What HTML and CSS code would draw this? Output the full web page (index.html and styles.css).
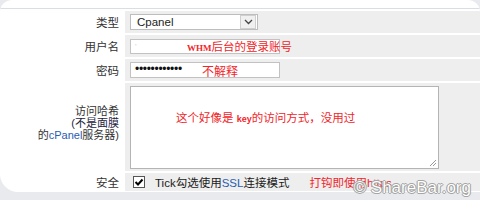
FILE: index.html
```html
<!DOCTYPE html>
<html>
<head>
	<meta charset="utf-8">
	<title>cPanel 设置</title>
	<link rel="stylesheet" href="styles.css">
</head>
<body>
<div class="page">
	<div class="panel">
		<div class="topbar"></div>
		<div class="form">
			<div class="lbl">类型</div>
			<div class="cell">
				<div class="select"><span>Cpanel</span><i class="arrow"><svg width="9" height="6" viewBox="0 0 9 6"><path d="M1 1 L4.5 4.5 L8 1" fill="none" stroke="#444" stroke-width="1.3"/></svg></i></div>
			</div>

			<div class="lbl">用户名</div>
			<div class="cell">
				<div class="field"><span class="speck">'</span></div>
				<span class="note note-user"><b>WHM</b>后台的登录账号</span>
			</div>

			<div class="lbl">密码</div>
			<div class="cell">
				<div class="field pwd">••••••••••••</div>
				<span class="note note-pwd">不解释</span>
			</div>

			<div class="lbl-multi">访问哈希<br><span class="dark">(不是面膜</span><br>的<span class="blue">cPanel</span>服务器)</div>
			<div class="cell cell-top">
				<div class="area">
					<span class="note">这个好像是 <b>key</b>的访问方式，没用过</span>
					<svg class="grip" width="9" height="9" viewBox="0 0 9 9"><path d="M8 2 L2 8 M8 5 L5 8" stroke="#999" stroke-width="1"/></svg>
				</div>
			</div>

			<div class="lbl">安全</div>
			<div class="cell">
				<span class="check"><svg width="10" height="10" viewBox="0 0 10 10"><path d="M1.5 5 L4 7.5 L8.5 2.5" fill="none" stroke="#000" stroke-width="2"/></svg></span>
				<span class="tick">Tick勾选使用<span class="blue">SSL</span>连接模式</span>
				<span class="note note-ssl">打钩即使用https</span>
			</div>
		</div>
	</div>
	<div class="mark">© ShareBar.org</div>
</div>
</body>
</html>
```

FILE: styles.css
```css
body{margin:0;background:#e8eaed;color:#222;font:11.5px "Liberation Sans","Noto Sans CJK SC",sans-serif;}
.page{position:relative;width:480px;height:200px;overflow:hidden;}
.panel{background:#fff;border-radius:12px 12px 0 18px;height:192px;overflow:hidden;}
.topbar{height:8px;border-bottom:1px solid #d9dee4;margin-bottom:2px;}
.form{display:grid;grid-template-columns:125px 1fr;grid-template-rows:22px 22px 22px 88px 18px;row-gap:2px;}
.lbl{display:flex;align-items:center;justify-content:flex-end;padding-right:6px;color:#333;}
.lbl-multi{padding:22px 6px 0 0;text-align:right;font-size:11px;line-height:12px;color:#333;}
.lbl-multi .dark{color:#1c2340;}
.blue{color:#2b5cb0;}
.cell{background:#eee;display:flex;align-items:center;padding-left:5px;}
.cell-top{align-items:flex-start;padding-top:3px;}
.select{display:flex;align-items:center;justify-content:space-between;width:126px;height:14px;border:1px solid #bdbdbd;background:#fff;}
.select span{padding-left:6px;color:#222;}
.arrow{display:flex;align-items:center;justify-content:center;width:14px;height:12px;margin-right:1px;background:#f0f0f0;border:1px solid #cfcfcf;}
.field{box-sizing:border-box;width:150px;height:15px;border:1px solid #c2c2c2;background:#fff;font-size:12px;line-height:13px;padding-left:4px;}
.speck{color:#ccc;font-size:8px;vertical-align:top;}
.pwd{height:16px;color:#111;letter-spacing:-0.3px;}
.note{color:#f0262a;white-space:nowrap;}
.note b{font:bold 9px "Liberation Serif",serif;}
.note-user{margin-left:-93px;}
.note-pwd{margin-left:-78px;font-size:12px;}
.area{position:relative;box-sizing:border-box;width:309px;height:83px;border:1px solid #b4b4b4;background:#fff;padding:22px 0 0 45px;}
.area .note b{font:bold 9px "Liberation Sans",sans-serif;}
.grip{position:absolute;right:1px;bottom:1px;}
.check{display:flex;align-items:center;justify-content:center;box-sizing:border-box;width:12px;height:12px;margin-left:3px;border:1px solid #555;background:#fff;}
.tick{margin-left:10px;color:#1a1a1a;}
.note-ssl{margin-left:20px;}
.mark{position:absolute;right:9px;bottom:2px;font:17px "Liberation Sans",sans-serif;color:#fff;text-shadow:0 0 1px #777,1px 0 0 #aaa,-1px 0 0 #aaa,0 1px 0 #aaa,0 -1px 0 #aaa;}
```
